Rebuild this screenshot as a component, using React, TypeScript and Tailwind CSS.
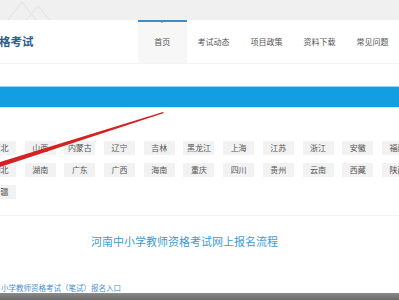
const row1 = ["河北", "山西", "内蒙古", "辽宁", "吉林", "黑龙江", "上海", "江苏", "浙江", "安徽", "福建"];
const row2 = ["湖北", "湖南", "广东", "广西", "海南", "重庆", "四川", "贵州", "云南", "西藏", "陕西"];
const row3 = ["新疆"];

const navItems = ["考试动态", "项目政策", "资料下载", "常见问题"];

function ProvinceRow({ items }: { items: string[] }) {
  return (
    <div className="flex gap-x-[8.7px] ml-[-15px]">
      {items.map((p) => (
        <span
          key={p}
          className="w-[31px] h-[14px] shrink-0 flex items-center justify-center bg-[#f2f2f2] text-[8px] text-[#555] whitespace-nowrap"
        >
          {p}
        </span>
      ))}
    </div>
  );
}

export default function App() {
  return (
    <div
      className="relative w-[399px] h-[300px] overflow-hidden bg-white"
      style={{ fontFamily: '"Noto Sans CJK SC", "Noto Sans", sans-serif' }}
    >
      {/* top gray band with faint watermark */}
      <div className="relative h-[20px] bg-[#f0f0f0]">
        <svg className="absolute left-0 top-0" width="60" height="20" viewBox="0 0 60 20">
          <path d="M8 20 L22 2 L36 20 M26 20 L38 6 L50 20" fill="none" stroke="#e2e2e2" strokeWidth="1" />
        </svg>
      </div>

      {/* header */}
      <div className="flex h-[43px] bg-white">
        <div className="w-[145px] flex items-center">
          <span className="ml-[-1px] text-[11.5px] font-bold text-[#2d5d8c] leading-none">格考试</span>
        </div>
        <div className="relative w-[52px] bg-[#f7f7f7] flex items-center justify-center text-[8px] text-[#555]">
          <div className="absolute left-0 right-0 top-0 h-[1.5px] bg-[#3b8dc6]" />
          <div className="absolute left-1/2 top-0 -translate-x-1/2 w-0 h-0 border-l-[3px] border-r-[3px] border-t-[3px] border-l-transparent border-r-transparent border-t-[#3b8dc6]" />
          首页
        </div>
        {navItems.map((n) => (
          <div key={n} className="w-[53px] shrink-0 flex items-center justify-center text-[8px] text-[#555] whitespace-nowrap">
            {n}
          </div>
        ))}
      </div>

      {/* gap under header */}
      <div className="h-[23px] bg-white border-t border-[#f4f4f4]" />

      {/* blue bar */}
      <div className="h-[1px] bg-[#9ad6f2]" />
      <div className="h-[20px] bg-[#149ee2]" />
      <div className="h-[1px] bg-[#c4e8f8]" />

      {/* provinces */}
      <div className="pt-[33px] flex flex-col gap-y-[8px]">
        <ProvinceRow items={row1} />
        <ProvinceRow items={row2} />
        <ProvinceRow items={row3} />
      </div>

      <div className="mt-[16px] h-[1px] bg-[#f3f3f3]" />

      <div className="mt-[20px] flex justify-center pr-[30px]">
        <span className="text-[11px] text-[#3b9ad8] leading-none">河南中小学教师资格考试网上报名流程</span>
      </div>

      <div className="mt-[37px] text-[7.5px] text-[#4a8fcf] leading-none ml-[1px]">
        小学教师资格考试（笔试）报名入口
      </div>

      <div className="absolute left-0 right-0 bottom-0 h-[7px] bg-gradient-to-b from-[#8a8a8a] to-[#6a6a6a]" />

      {/* red annotation stroke */}
      <svg className="absolute left-0 top-0 pointer-events-none" width="399" height="300">
        <polygon points="163,112 164,113 0,167 0,162" fill="#d42222" />
      </svg>
    </div>
  );
}
